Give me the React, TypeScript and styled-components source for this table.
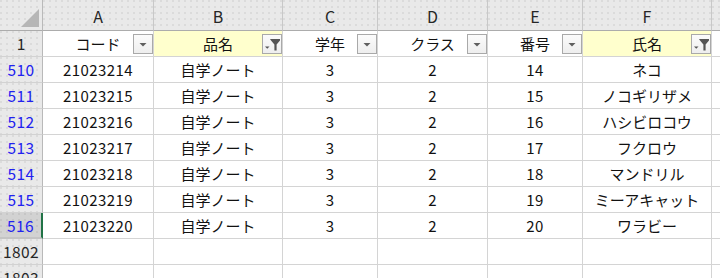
import React from "react";
import styled, { createGlobalStyle, css } from "styled-components";

const GlobalStyle = createGlobalStyle`
	html, body {
		margin: 0;
		padding: 0;
		background: #fff;
		overflow: hidden;
	}
	body {
		font-family: "Noto Sans CJK JP", "Noto Sans", sans-serif;
	}
`;

const COLS = ["A", "B", "C", "D", "E", "F", "G"];

type Row = {
	no: number;
	code: string;
	item: string;
	grade: string;
	klass: string;
	num: string;
	name: string;
};

const rows: Row[] = [
	{ no: 510, code: "21023214", item: "自学ノート", grade: "3", klass: "2", num: "14", name: "ネコ" },
	{ no: 511, code: "21023215", item: "自学ノート", grade: "3", klass: "2", num: "15", name: "ノコギリザメ" },
	{ no: 512, code: "21023216", item: "自学ノート", grade: "3", klass: "2", num: "16", name: "ハシビロコウ" },
	{ no: 513, code: "21023217", item: "自学ノート", grade: "3", klass: "2", num: "17", name: "フクロウ" },
	{ no: 514, code: "21023218", item: "自学ノート", grade: "3", klass: "2", num: "18", name: "マンドリル" },
	{ no: 515, code: "21023219", item: "自学ノート", grade: "3", klass: "2", num: "19", name: "ミーアキャット" },
	{ no: 516, code: "21023220", item: "自学ノート", grade: "3", klass: "2", num: "20", name: "ワラビー" },
];

const headers = [
	{ label: "コード", filtered: false },
	{ label: "品名", filtered: true },
	{ label: "学年", filtered: false },
	{ label: "クラス", filtered: false },
	{ label: "番号", filtered: false },
	{ label: "氏名", filtered: true },
];

const dots = css`
	background-color: #e9e9e9;
	background-image: radial-gradient(circle at 1px 1px, rgba(0, 0, 0, 0.06) 0.8px, transparent 1px);
	background-size: 6px 6px;
`;

// the sheet is wider than the window; column G runs off the right edge
const Viewport = styled.div`
	width: 720px;
	height: 278px;
	overflow: hidden;
`;

const Sheet = styled.div`
	display: grid;
	grid-template-columns: 43px 111px 129px 95px 110px 95px 129px 110px;
	grid-template-rows: 31px;
	grid-auto-rows: 26px;
	width: max-content;
	font-size: 15px;
	color: #111;
`;

const Corner = styled.div`
	${dots};
	border-right: 1px solid #b9b9b9;
	border-bottom: 1px solid #acacac;
	display: flex;
	align-items: flex-end;
	justify-content: flex-end;
	padding: 0 3px 3px 0;
	box-sizing: border-box;

	svg {
		display: block;
	}
`;

const ColHeader = styled.div`
	${dots};
	border-right: 1px solid #c8c8c8;
	border-bottom: 1px solid #acacac;
	display: flex;
	align-items: center;
	justify-content: center;
	font-size: 16px;
	color: #262626;
	padding-top: 1px;
	box-sizing: border-box;
`;

const RowHeader = styled.div<{ $selected?: boolean; $filtered?: boolean; $gap?: boolean }>`
	${dots};
	${p => p.$selected && "background-color: #d2d2d2;"}
	border-right: ${p => (p.$selected ? "2px solid #217346" : "1px solid #b9b9b9")};
	border-bottom: ${p => (p.$gap ? "2px solid #c4c4c4" : "1px solid #d2d2d2")};
	display: flex;
	align-items: center;
	justify-content: center;
	box-sizing: border-box;
	color: ${p => (p.$filtered ? "#2121f0" : "#262626")};
	font-size: 15.5px;
	padding-bottom: 1px;
`;

const Cell = styled.div<{ $yellow?: boolean }>`
	position: relative;
	background: ${p => (p.$yellow ? "#ffffcd" : "#fff")};
	border-right: 1px solid #d4d4d4;
	border-bottom: 1px solid #d4d4d4;
	display: flex;
	align-items: center;
	justify-content: center;
	box-sizing: border-box;
	white-space: nowrap;
	padding-bottom: 1px;
`;

const Digits = styled.span`
	letter-spacing: 0.4px;
`;

const FilterButton = styled.div`
	position: absolute;
	right: 0;
	top: 3px;
	width: 20px;
	height: 20px;
	box-sizing: border-box;
	border: 1px solid #a9a9a9;
	background: linear-gradient(#fbfbfb, #eeeeee);
	display: flex;
	align-items: center;
	justify-content: center;

	svg {
		display: block;
	}
`;

const DropIcon = () => (
	<svg width="18" height="18" viewBox="0 0 18 18">
		<path d="M5.5 8 L12.5 8 L9 11.5 Z" fill="#5f5f5f" />
	</svg>
);

const FunnelIcon = () => (
	<svg width="18" height="18" viewBox="0 0 18 18">
		<path d="M7 4 L17 4 L17 5.5 L13.6 9.5 L13.6 15.5 L11.4 15.5 L11.4 9.5 L8 5.5 Z" fill="#555" />
		<path d="M2 11.5 L6.5 11.5 L4.25 13.8 Z" fill="#555" />
	</svg>
);

const Triangle = () => (
	<svg width="18" height="18" viewBox="0 0 18 18">
		<path d="M18 0 L18 18 L0 18 Z" fill="#b6b6b6" />
	</svg>
);

const Num = ({ children }: { children: string }) => <Digits>{children}</Digits>;

export default function App() {
	return (
		<>
			<GlobalStyle />
			<Viewport>
				<Sheet>
					<Corner>
						<Triangle />
					</Corner>
					{COLS.map(c => (
						<ColHeader key={c}>{c}</ColHeader>
					))}

					<RowHeader>1</RowHeader>
					{headers.map(h => (
						<Cell key={h.label} $yellow={h.filtered}>
							{h.label}
							<FilterButton>{h.filtered ? <FunnelIcon /> : <DropIcon />}</FilterButton>
						</Cell>
					))}
					<Cell />

					{rows.map((r, i) => (
						<React.Fragment key={r.no}>
							<RowHeader $filtered $selected={i === rows.length - 1} $gap={i === rows.length - 1}>
								<Num>{String(r.no)}</Num>
							</RowHeader>
							<Cell>
								<Num>{r.code}</Num>
							</Cell>
							<Cell>{r.item}</Cell>
							<Cell>
								<Num>{r.grade}</Num>
							</Cell>
							<Cell>
								<Num>{r.klass}</Num>
							</Cell>
							<Cell>
								<Num>{r.num}</Num>
							</Cell>
							<Cell>{r.name}</Cell>
							<Cell />
						</React.Fragment>
					))}

					{[1802, 1803].map(n => (
						<React.Fragment key={n}>
							<RowHeader>
								<Num>{String(n)}</Num>
							</RowHeader>
							{COLS.map(c => (
								<Cell key={c} />
							))}
						</React.Fragment>
					))}
				</Sheet>
			</Viewport>
		</>
	);
}
